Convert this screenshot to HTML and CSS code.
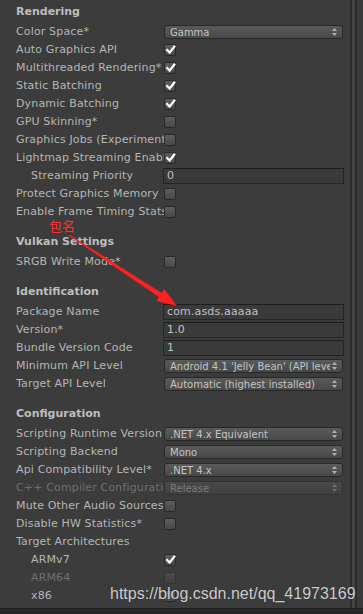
FILE: index.html
```html
<!DOCTYPE html>
<html lang="en">
<head>
    <meta charset="UTF-8">
    <meta name="viewport" content="width=device-width, initial-scale=1.0">
    <title>Player Settings</title>
    <link rel="stylesheet" href="styles.css">
</head>
<body>
    <div class="window">
        <div class="main">
            <div class="inspector">

                <!-- Rendering -->
                <div class="header first">Rendering</div>
                <div class="row">
                    <span class="label">Color Space*</span>
                    <div class="popup"><span class="value">Gamma</span><svg class="arrows" width="5" height="8" viewBox="0 0 5 8"><path d="M2.5 0L5 3H0Z M0 5H5L2.5 8Z"/></svg></div>
                </div>
                <div class="row">
                    <span class="label">Auto Graphics API</span>
                    <span class="check on"><svg width="12" height="12" viewBox="0 0 12 12"><path d="M2.4 5.2L5.6 8.6L11 1.8"/></svg></span>
                </div>
                <div class="row">
                    <span class="label">Multithreaded Rendering*</span>
                    <span class="check on"><svg width="12" height="12" viewBox="0 0 12 12"><path d="M2.4 5.2L5.6 8.6L11 1.8"/></svg></span>
                </div>
                <div class="row">
                    <span class="label">Static Batching</span>
                    <span class="check on"><svg width="12" height="12" viewBox="0 0 12 12"><path d="M2.4 5.2L5.6 8.6L11 1.8"/></svg></span>
                </div>
                <div class="row">
                    <span class="label">Dynamic Batching</span>
                    <span class="check on"><svg width="12" height="12" viewBox="0 0 12 12"><path d="M2.4 5.2L5.6 8.6L11 1.8"/></svg></span>
                </div>
                <div class="row">
                    <span class="label">GPU Skinning*</span>
                    <span class="check"></span>
                </div>
                <div class="row">
                    <span class="label">Graphics Jobs (Experimental)*</span>
                    <span class="check"></span>
                </div>
                <div class="row">
                    <span class="label">Lightmap Streaming Enabled</span>
                    <span class="check on"><svg width="12" height="12" viewBox="0 0 12 12"><path d="M2.4 5.2L5.6 8.6L11 1.8"/></svg></span>
                </div>
                <div class="row indent">
                    <span class="label">Streaming Priority</span>
                    <div class="field">0</div>
                </div>
                <div class="row">
                    <span class="label">Protect Graphics Memory</span>
                    <span class="check"></span>
                </div>
                <div class="row">
                    <span class="label">Enable Frame Timing Stats</span>
                    <span class="check"></span>
                </div>

                <!-- Vulkan -->
                <div class="header">Vulkan Settings</div>
                <div class="row">
                    <span class="label">SRGB Write Mode*</span>
                    <span class="check"></span>
                </div>

                <!-- Identification -->
                <div class="header">Identification</div>
                <div class="row">
                    <span class="label">Package Name</span>
                    <div class="field">com.asds.aaaaa</div>
                </div>
                <div class="row">
                    <span class="label">Version*</span>
                    <div class="field">1.0</div>
                </div>
                <div class="row">
                    <span class="label">Bundle Version Code</span>
                    <div class="field">1</div>
                </div>
                <div class="row">
                    <span class="label">Minimum API Level</span>
                    <div class="popup"><span class="value">Android 4.1 'Jelly Bean' (API level 16)</span><svg class="arrows" width="5" height="8" viewBox="0 0 5 8"><path d="M2.5 0L5 3H0Z M0 5H5L2.5 8Z"/></svg></div>
                </div>
                <div class="row">
                    <span class="label">Target API Level</span>
                    <div class="popup"><span class="value">Automatic (highest installed)</span><svg class="arrows" width="5" height="8" viewBox="0 0 5 8"><path d="M2.5 0L5 3H0Z M0 5H5L2.5 8Z"/></svg></div>
                </div>

                <!-- Configuration -->
                <div class="header">Configuration</div>
                <div class="row">
                    <span class="label">Scripting Runtime Version</span>
                    <div class="popup"><span class="value">.NET 4.x Equivalent</span><svg class="arrows" width="5" height="8" viewBox="0 0 5 8"><path d="M2.5 0L5 3H0Z M0 5H5L2.5 8Z"/></svg></div>
                </div>
                <div class="row">
                    <span class="label">Scripting Backend</span>
                    <div class="popup"><span class="value">Mono</span><svg class="arrows" width="5" height="8" viewBox="0 0 5 8"><path d="M2.5 0L5 3H0Z M0 5H5L2.5 8Z"/></svg></div>
                </div>
                <div class="row">
                    <span class="label">Api Compatibility Level*</span>
                    <div class="popup"><span class="value">.NET 4.x</span><svg class="arrows" width="5" height="8" viewBox="0 0 5 8"><path d="M2.5 0L5 3H0Z M0 5H5L2.5 8Z"/></svg></div>
                </div>
                <div class="row disabled">
                    <span class="label">C++ Compiler Configuration</span>
                    <div class="popup"><span class="value">Release</span><svg class="arrows" width="5" height="8" viewBox="0 0 5 8"><path d="M2.5 0L5 3H0Z M0 5H5L2.5 8Z"/></svg></div>
                </div>
                <div class="row">
                    <span class="label">Mute Other Audio Sources*</span>
                    <span class="check"></span>
                </div>
                <div class="row">
                    <span class="label">Disable HW Statistics*</span>
                    <span class="check"></span>
                </div>
                <div class="row">
                    <span class="label">Target Architectures</span>
                </div>
                <div class="row indent">
                    <span class="label">ARMv7</span>
                    <span class="check on"><svg width="12" height="12" viewBox="0 0 12 12"><path d="M2.4 5.2L5.6 8.6L11 1.8"/></svg></span>
                </div>
                <div class="row indent disabled">
                    <span class="label">ARM64</span>
                    <span class="check"></span>
                </div>
                <div class="row indent">
                    <span class="label">x86</span>
                    <span class="check"></span>
                </div>
                <div class="row indent">
                    <span class="label">Split APKs by target architecture</span>
                    <span class="check"></span>
                </div>
            </div>

            <!-- scrollbar edge -->
            <div class="edge">
                <div class="edge-line"></div>
                <div class="edge-track"></div>
                <div class="edge-line"></div>
                <div class="edge-rest"></div>
            </div>
        </div>
        <div class="statusbar"></div>

        <!-- annotation + watermark laid over the screenshot -->
        <span class="note">包名</span>
        <svg class="arrow" width="363" height="614" viewBox="0 0 363 614">
            <path d="M69.3 234.6L161.7 292.9L164.1 289.1L177 306L156.4 300.9L158.9 297.1L68.7 235.4Z"/>
        </svg>
        <span class="watermark">https://blog.csdn.net/qq_41973169</span>
    </div>
</body>
</html>
```

FILE: styles.css
```css
* {
    box-sizing: border-box;
}
body {
    margin: 0;
    background-color: #3c3c3c;
    font-family: 'DejaVu Sans', sans-serif;
    font-size: 11px;
    letter-spacing: 0.15px;
    color: #b6b6b6;
    overflow: hidden;
}
.window {
    position: relative;
    display: flex;
    flex-direction: column;
    height: 614px;
}
.main {
    flex: 1;
    display: flex;
    min-height: 0;
    overflow: hidden;
}
.inspector {
    width: 350px;
    flex: none;
    padding: 3px 7px 0 16px;
}
.header {
    height: 18px;
    line-height: 18px;
    margin: 12px 0 2px 0;
    font-weight: bold;
    letter-spacing: 0;
    color: #bebebe;
}
.header.first {
    margin-top: 0;
}
.row {
    display: flex;
    align-items: center;
    height: 18px;
}
.label {
    width: 148px;
    flex: none;
    line-height: 18px;
    white-space: nowrap;
    overflow: hidden;
}
.indent .label {
    padding-left: 15px;
}
.disabled .label {
    color: #6f6f6f;
}
.disabled .popup, .disabled .check {
    opacity: 0.45;
}
.check {
    width: 12px;
    height: 12px;
    flex: none;
    border: 1px solid #292929;
    border-radius: 2px;
    background: linear-gradient(#5e5e5e, #474747);
    position: relative;
}
.check svg {
    position: absolute;
    left: -1px;
    top: -1px;
}
.check path {
    fill: none;
    stroke: #fff;
    stroke-width: 2.3;
}
.popup {
    flex: 1;
    min-width: 0;
    height: 14px;
    display: flex;
    align-items: center;
    padding: 0 5px 0 5px;
    border: 1px solid #282828;
    border-radius: 3px;
    background: linear-gradient(#5a5a5a, #484848);
    color: #c4c4c4;
    font-size: 10px;
    letter-spacing: 0;
}
.popup .value {
    flex: 1;
    white-space: nowrap;
    overflow: hidden;
}
.arrows {
    flex: none;
    margin-left: 2px;
    fill: #b0b0b0;
}
.field {
    flex: 1;
    height: 16px;
    margin: 0 -1px;
    padding-left: 3px;
    line-height: 14px;
    border: 1px solid #252525;
    border-top-color: #1e1e1e;
    background: #3a3a3a;
    color: #c2c2c2;
    white-space: nowrap;
    overflow: hidden;
}
.edge {
    flex: 1;
    display: flex;
}
.edge-line {
    width: 2px;
    background: #2b2b2b;
}
.edge-track {
    width: 3px;
    background: #434343;
}
.edge-rest {
    flex: 1;
    background: #3a3a3a;
}
.statusbar {
    height: 6px;
    flex: none;
    background: #282828;
    border-top: 1px solid #1f1f1f;
}
.note {
    position: absolute;
    left: 49px;
    top: 221px;
    font-family: 'Noto Sans CJK SC', sans-serif;
    font-size: 13px;
    line-height: 10px;
    letter-spacing: 0;
    color: #ff3030;
}
.arrow {
    position: absolute;
    left: 0;
    top: 0;
    fill: #ff2020;
    pointer-events: none;
}
.watermark {
    position: absolute;
    left: 110px;
    top: 585px;
    font-family: 'Liberation Sans', Arial, sans-serif;
    font-size: 16px;
    line-height: 18px;
    letter-spacing: 0;
    color: rgba(235, 235, 235, 0.85);
    text-shadow: 0 0 1px rgba(0, 0, 0, 0.4);
    white-space: nowrap;
}
```
